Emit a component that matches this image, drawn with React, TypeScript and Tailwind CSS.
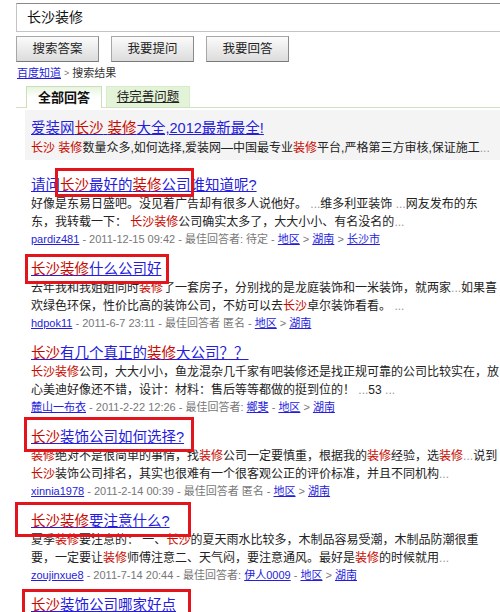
import type { ReactNode } from 'react'

// text marked with *...* is a red keyword, "..." is a grey ellipsis
function Rich({ text }: { text: string }) {
  const parts = text.split(/(\*[^*]+\*|\.\.\.)/)
  return (
    <>
      {parts.map((p, i) => {
        if (p.startsWith('*') && p.endsWith('*') && p.length > 1) {
          return <span key={i} className="text-[#c60a00]">{p.slice(1, -1)}</span>
        }
        if (p === '...') {
          return <span key={i} className="text-[#999]">...</span>
        }
        return <span key={i}>{p}</span>
      })}
    </>
  )
}

interface Result {
  title: string
  lines: string[]
  user: string
  time: string
  best: string
  bestUser?: string
  regions: string[]
}

const RESULTS: Result[] = [
  {
    title: '请问*长沙*最好的*装修*公司谁知道呢?',
    lines: [
      '好像是东易日盛吧。没见着广告却有很多人说他好。 ...维多利亚装饰 ...网友发布的东',
      '东，我转载一下： *长沙装修*公司确实太多了，大大小小、有名没名的...',
    ],
    user: 'pardiz481',
    time: '2011-12-15 09:42',
    best: '最佳回答者: 待定',
    regions: ['地区', '湖南', '长沙市'],
  },
  {
    title: '*长沙装修*什么公司好',
    lines: [
      '去年我和我姐姐同时*装修*了一套房子，分别找的是龙庭装饰和一米装饰，就两家...如果喜',
      '欢绿色环保，性价比高的装饰公司，不妨可以去*长沙*卓尔装饰看看。 ...',
    ],
    user: 'hdpok11',
    time: '2011-6-7 23:11',
    best: '最佳回答者 匿名',
    regions: ['地区', '湖南'],
  },
  {
    title: '*长沙*有几个真正的*装修*大公司？？',
    lines: [
      '*长沙装修*公司，大大小小，鱼龙混杂几千家有吧装修还是找正规可靠的公司比较实在，放',
      '心美迪好像还不错，设计：材料：售后等等都做的挺到位的！ ...53 ...',
    ],
    user: '麓山一布衣',
    time: '2011-2-22 12:26',
    best: '最佳回答者: ',
    bestUser: '鄉斐',
    regions: ['地区', '湖南'],
  },
  {
    title: '*长沙*装饰公司如何选择?',
    lines: [
      '*装修*绝对不是很简单的事情，找*装修*公司一定要慎重，根据我的*装修*经验，选*装修*...说到',
      '*长沙*装饰公司排名，其实也很难有一个很客观公正的评价标准，并且不同机构...',
    ],
    user: 'xinnia1978',
    time: '2011-2-14 00:39',
    best: '最佳回答者 匿名',
    regions: ['地区', '湖南'],
  },
  {
    title: '*长沙装修*要注意什么?',
    lines: [
      '夏季*装修*要注意的： 一、*长沙*的夏天雨水比较多，木制品容易受潮，木制品防潮很重',
      '要，一定要让*装修*师傅注意二、天气闷，要注意通风。最好是*装修*的时候就用...',
    ],
    user: 'zoujinxue8',
    time: '2011-7-14 20:44',
    best: '最佳回答者: ',
    bestUser: '伊人0009',
    regions: ['地区', '湖南'],
  },
  {
    title: '*长沙*装饰公司哪家好点',
    lines: [],
    user: '',
    time: '',
    best: '',
    regions: [],
  },
]

// red annotation boxes drawn over the screenshot
const MARKS = [
  'left-[55px] top-[168px] w-[139px] h-[29px]',
  'left-[25px] top-[254px] w-[144px] h-[30px]',
  'left-[24px] top-[417px] w-[170px] h-[35px]',
  'left-[15px] top-[502px] w-[176px] h-[35px]',
  'left-[22px] top-[589px] w-[169px] h-[35px]',
]

function Link({ children }: { children: ReactNode }) {
  return <span className="text-[#261cdc] underline">{children}</span>
}

function Meta({ r }: { r: Result }) {
  return (
    <div className="text-[11px] leading-[17px] text-[#777] whitespace-nowrap">
      <Link>{r.user}</Link>
      {` - ${r.time} - ${r.best}`}
      {r.bestUser && <Link>{r.bestUser}</Link>}
      {' - '}
      {r.regions.map((g, i) => (
        <span key={g}>
          {i > 0 && ' > '}
          <Link>{g}</Link>
        </span>
      ))}
    </div>
  )
}

function Btn({ label }: { label: string }) {
  return (
    <div className="w-[83px] h-[26px] flex items-center justify-center border border-[#a8a8a8] border-b-[#7a7a7a] border-r-[#8a8a8a] bg-gradient-to-b from-[#fbfbfb] to-[#dcdcdc] text-[12.5px] text-[#222]">
      {label}
    </div>
  )
}

export default function App() {
  return (
    <div className="relative w-[500px] h-[612px] overflow-hidden bg-white text-[#222] font-['Liberation_Sans','Noto_Sans_CJK_SC',sans-serif]">
      {/* search box */}
      <div className="pl-[16px] pt-[3px]">
        <div className="h-[29px] flex items-center pl-[10px] border border-[#c4c4c4] border-t-[#8a8a8a] border-r-0 text-[14px] text-[#111]">
          长沙装修
        </div>
        <div className="flex gap-[12px] mt-[4px]">
          <Btn label="搜索答案" />
          <Btn label="我要提问" />
          <Btn label="我要回答" />
        </div>
        <div className="mt-[4px] h-[14px] text-[11px] leading-[14px] flex items-center gap-[3px] pl-[1px]">
          <Link>百度知道</Link>
          <span className="text-[#777] text-[9px]">&gt;</span>
          <span className="text-[#333]">搜索结果</span>
        </div>

        {/* tabs */}
        <div className="mt-[6px] h-[22px] flex items-end gap-[4px] pl-[10px] border-b border-[#cfe2c2]">
          <div className="w-[76px] h-[22px] -mb-px flex items-center justify-center border border-b-0 border-[#c9e0b9] bg-gradient-to-b from-[#e7f4de] via-white to-white text-[13px] font-bold text-[#111]">
            全部回答
          </div>
          <div className="w-[84px] h-[21px] flex items-center justify-center bg-[#e3f3d8] border border-b-0 border-[#d7ebca] text-[12.5px] text-[#222] underline">
            待完善问题
          </div>
        </div>
      </div>

      {/* sponsored result */}
      <div className="ml-[25px] mt-[2px] h-[50px] bg-[#f4f4f4] pl-[6px] pt-[8px] whitespace-nowrap">
        <div className="text-[14.5px] leading-[20px] text-[#261cdc] underline">
          <Rich text="爱装网*长沙* *装修*大全,2012最新最全!" />
        </div>
        <div className="text-[12px] leading-[18px] mt-[1px]">
          <Rich text="*长沙* *装修*数量众多,如何选择,爱装网—中国最专业*装修*平台,严格第三方审核,保证施工..." />
        </div>
      </div>

      {/* results */}
      <div className="pl-[31px] pt-[15px] flex flex-col">
        {RESULTS.map((r, i) => (
          <div key={i} className="mb-[11px] whitespace-nowrap">
            <div className="text-[14.5px] leading-[20px] text-[#261cdc] underline">
              <Rich text={r.title} />
            </div>
            {r.lines.map((l, j) => (
              <div key={j} className="text-[12px] leading-[18px] text-[#222]">
                <Rich text={l} />
              </div>
            ))}
            {r.user && <Meta r={r} />}
          </div>
        ))}
      </div>

      {MARKS.map((m, i) => (
        <div key={i} className={`absolute border-[3px] border-[#e3141c] ${m}`} />
      ))}
    </div>
  )
}
